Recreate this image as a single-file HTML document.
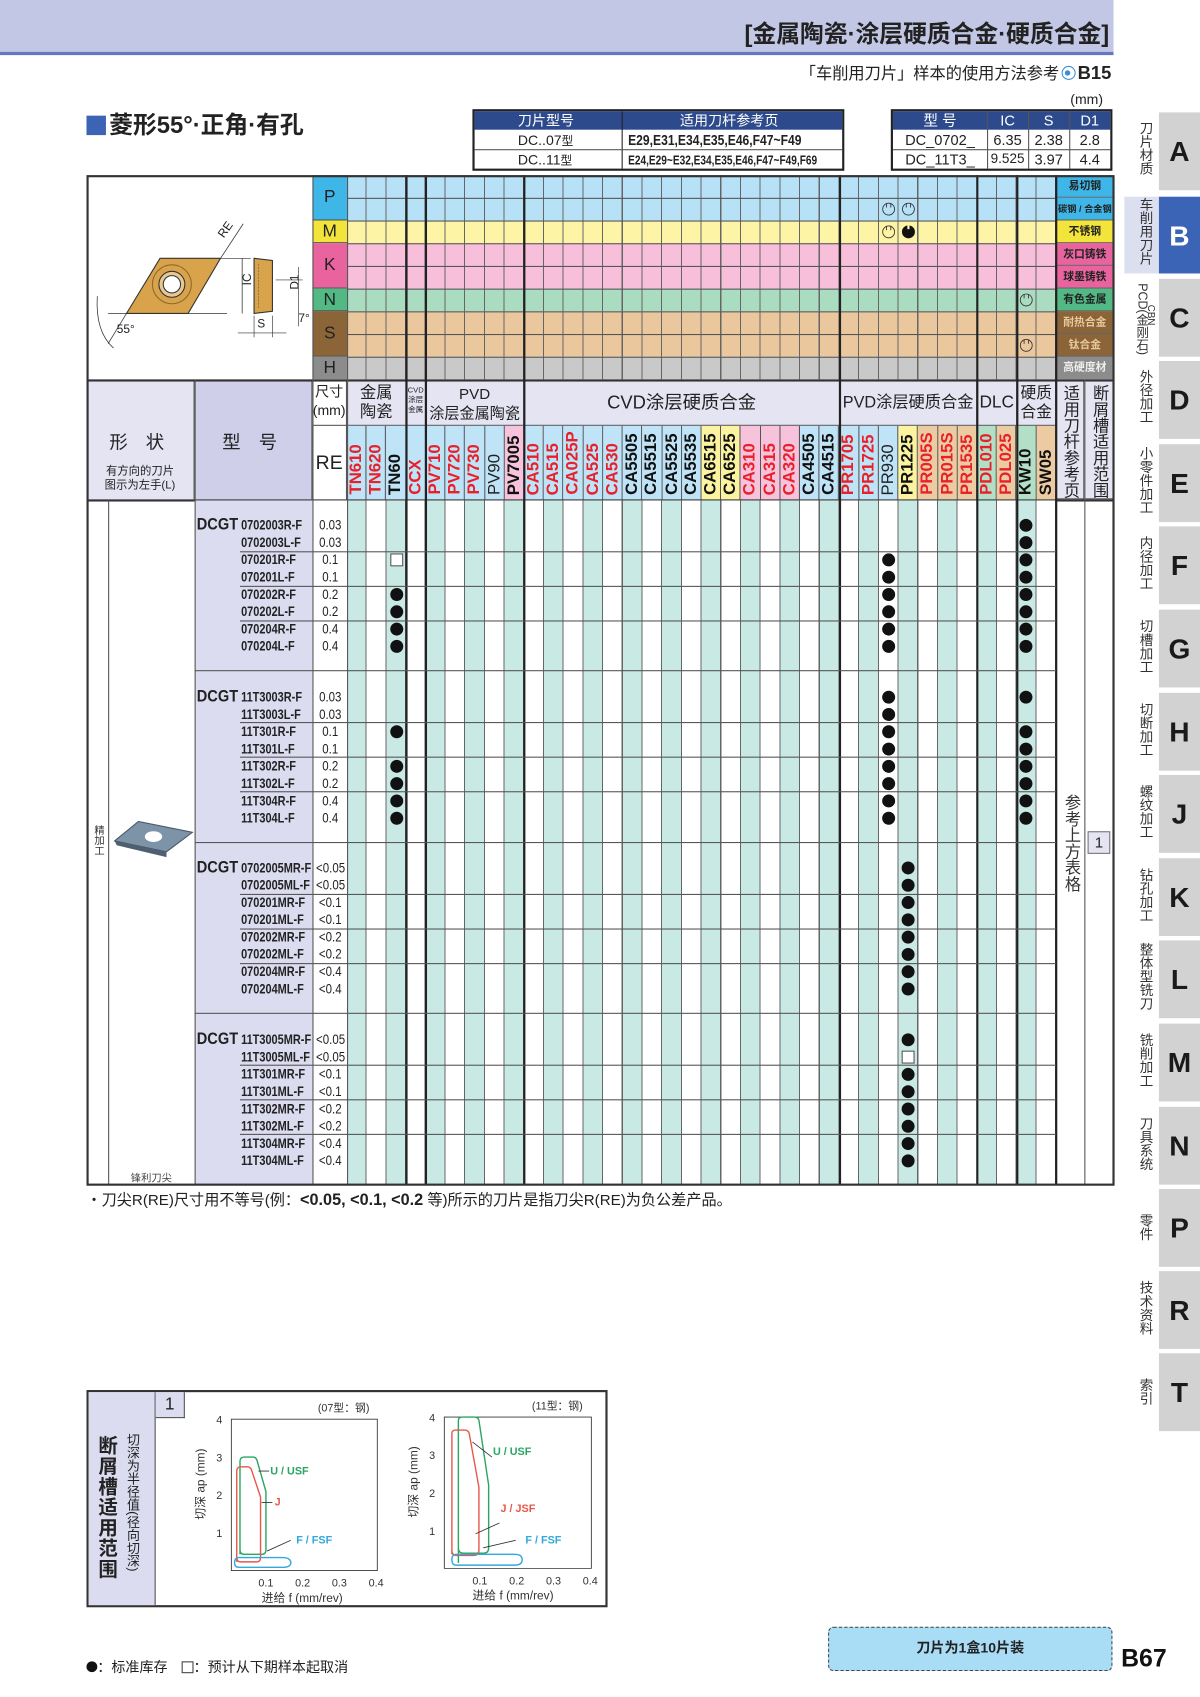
<!DOCTYPE html>
<html><head><meta charset="utf-8">
<style>
*{box-sizing:border-box;margin:0;padding:0}
body{width:1200px;height:1697px;overflow:hidden;background:#fff;position:relative;font-family:"Liberation Sans","Noto Sans CJK SC",sans-serif;color:#222}
#w{position:absolute;left:0;top:0;width:1110px;height:1570px;transform:scale(1.08108,1.08089);transform-origin:0 0}
.a{position:absolute}
.v{writing-mode:vertical-rl}
.dot{position:absolute;width:12px;height:12px;border-radius:50%;background:#111}
.sq{position:absolute;width:12px;height:12px;border:1px solid #555;background:#fff}
.grid{position:absolute;left:321px;width:656px}
.lab{position:absolute;left:977px;width:53px;font-size:10px;font-weight:bold;text-align:center;color:#222;border-bottom:1px solid #666}
.hl{position:absolute;height:1px;background:#555}
.vl{position:absolute;width:1px;background:#555}
.tv{position:absolute;width:2px;background:#222;top:162px;height:934px}
.gh{position:absolute;top:351px;height:43px;background:#e4e4f3;border-right:1px solid #555;border-bottom:1px solid #555;text-align:center;font-size:15px;line-height:18px;white-space:nowrap;overflow:hidden}
#gr{position:absolute;left:321px;top:394px;width:656px;height:68px;display:flex}
#gr span{width:18.222px;height:68px;border-right:1px solid #555;background:#bfe3f7;position:relative}
#gr span b{position:absolute;left:0;bottom:4px;width:18px;writing-mode:vertical-rl;transform:rotate(180deg);font-size:15.5px;line-height:18px;font-weight:bold;color:#e8202a;white-space:nowrap;font-family:"Liberation Sans",sans-serif}
#gr span b.k{color:#111}
#gr span b.n{font-weight:normal;color:#222}
.y{background:#fbf3a0!important}.p{background:#f7c2db!important}.t{background:#eccba3!important}.g{background:#b3dfc6!important}
.mg{position:absolute;left:180px;width:141px}
.mg div{height:16px;line-height:16px;position:relative;font-weight:bold;font-size:13px;white-space:nowrap}
.mg div .c{position:absolute;left:43px;transform:scaleX(0.78);transform-origin:0 50%}
.mg div .r{position:absolute;left:110px;width:31px;text-align:center;font-weight:normal;font-size:12.5px;transform:scaleX(0.85)}
.mg div .d{position:absolute;left:2px;font-size:15px;transform:scaleX(0.9);transform-origin:0 50%}
.tab{position:absolute;left:1072px;width:38px;height:72px;background:#d2d2d2;font-weight:bold;font-size:26px;text-align:center;line-height:72px;color:#1a1a1a}
.tl{position:absolute;left:1046px;width:20px;font-size:12.5px;line-height:14px;writing-mode:vertical-rl;color:#333;text-align:center}
.nr{display:inline-block;transform:scaleX(0.8);transform-origin:0 50%;white-space:nowrap}
</style></head><body><div id="w">

<!-- header -->
<div class="a" style="left:0;top:0;width:1030px;height:49px;background:#c2c7e5"></div>
<div class="a" style="left:0;top:48px;width:1030px;height:3px;background:#6476c4"></div>
<div class="a" style="right:84px;top:14px;font-size:22px;font-weight:bold;color:#222">[金属陶瓷·涂层硬质合金·硬质合金]</div>
<div class="a" style="right:82px;top:57px;font-size:15px;color:#222">「车削用刀片」样本的使用方法参考<span style="display:inline-block;width:13px;height:13px;border-radius:50%;border:1.5px solid #3a8fd8;vertical-align:-1px;position:relative;margin:0 2px"><span style="position:absolute;left:2.5px;top:2.5px;width:5px;height:5px;border-radius:50%;background:#3a8fd8"></span></span><b style="font-size:17px">B15</b></div>
<div class="a" style="left:990px;top:84px;font-size:13px">(mm)</div>
<div class="a" style="left:80px;top:98px;font-size:22px;font-weight:bold"><span style="display:inline-block;width:18px;height:18px;background:#3d63b5;vertical-align:-2px;margin-right:3px"></span>菱形55°·正角·有孔</div>

<!-- holder table -->
<div class="a" style="left:437px;top:101px;width:344px;height:57px;border:2px solid #222;font-size:13px">
 <div class="a" style="left:0;top:0;width:340px;height:17px;background:#2d4b8c;color:#fff;line-height:17px"><span class="a" style="left:40px">刀片型号</span><span class="a" style="left:190px">适用刀杆参考页</span></div>
 <div class="vl" style="left:136px;top:0;height:53px;background:#222"></div>
 <div class="hl" style="left:0;top:35px;width:340px"></div>
 <div class="a" style="left:40px;top:18px;line-height:17px">DC..07<small>型</small></div>
 <div class="a" style="left:40px;top:36px;line-height:17px">DC..11<small>型</small></div>
 <div class="a" style="left:142px;top:18px;line-height:17px;font-weight:bold;font-size:14px"><span class="nr">E29,E31,E34,E35,E46,F47~F49</span></div>
 <div class="a" style="left:142px;top:37px;line-height:17px;font-weight:bold;font-size:12px"><span class="nr" style="transform:scaleX(0.78)">E24,E29~E32,E34,E35,E46,F47~F49,F69</span></div>
</div>
<!-- dims table -->
<div class="a" style="left:824px;top:101px;width:205px;height:57px;border:2px solid #222;font-size:13.5px;text-align:center">
 <div class="a" style="left:0;top:0;width:201px;height:17px;background:#2d4b8c;color:#fff;line-height:17px"></div>
 <div class="a" style="left:0;top:0;width:87px;color:#fff;line-height:17px">型 号</div>
 <div class="a" style="left:87px;top:0;width:38px;color:#fff;line-height:17px">IC</div>
 <div class="a" style="left:125px;top:0;width:38px;color:#fff;line-height:17px">S</div>
 <div class="a" style="left:163px;top:0;width:38px;color:#fff;line-height:17px">D1</div>
 <div class="vl" style="left:87px;top:0;height:53px"></div><div class="vl" style="left:125px;top:0;height:53px"></div><div class="vl" style="left:163px;top:0;height:53px"></div>
 <div class="hl" style="left:0;top:35px;width:201px"></div>
 <div class="a" style="left:0;top:18px;width:87px;line-height:17px">DC_0702_</div>
 <div class="a" style="left:0;top:36px;width:87px;line-height:17px">DC_11T3_</div>
 <div class="a" style="left:87px;top:18px;width:38px;line-height:17px">6.35</div><div class="a" style="left:87px;top:36px;width:38px;line-height:17px;font-size:12.5px">9.525</div>
 <div class="a" style="left:125px;top:18px;width:38px;line-height:17px">2.38</div><div class="a" style="left:125px;top:36px;width:38px;line-height:17px">3.97</div>
 <div class="a" style="left:163px;top:18px;width:38px;line-height:17px">2.8</div><div class="a" style="left:163px;top:36px;width:38px;line-height:17px">4.4</div>
</div>

<!-- diagram -->
<svg class="a" style="left:80px;top:162px" width="209" height="189" viewBox="0 0 209 189">
 <polygon points="37,128 68,77 124,77 94,128" fill="#d9a34c" stroke="#333" stroke-width="1"/>
 <circle cx="79" cy="101" r="18" fill="none" stroke="#8a6a30" stroke-width="1"/>
 <circle cx="79" cy="101" r="12" fill="#e8c890" stroke="#333" stroke-width="1"/>
 <circle cx="79" cy="101" r="8" fill="#fff" stroke="#333" stroke-width="1"/>
 <line x1="20" y1="128" x2="130" y2="128" stroke="#333" stroke-width="0.7"/>
 <line x1="37" y1="128" x2="20" y2="156" stroke="#333" stroke-width="0.7"/>
 <path d="M10,112 Q8,145 25,160" fill="none" stroke="#333" stroke-width="0.7"/>
 <text x="28" y="146" font-size="11" fill="#222">55°</text>
 <line x1="124" y1="77" x2="145" y2="45" stroke="#333" stroke-width="0.7"/>
 <text x="122" y="55" font-size="11" fill="#222" transform="rotate(-55 128 52)">RE</text>
 <line x1="124" y1="77" x2="152" y2="77" stroke="#333" stroke-width="0.6"/>
 <line x1="144" y1="77" x2="144" y2="128" stroke="#333" stroke-width="0.7"/>
 <text x="148" y="106" font-size="11" fill="#222" transform="rotate(-90 148 102)">IC</text>
 <polygon points="155,77 172,79 172,126 155,128" fill="#d9a34c" stroke="#333" stroke-width="1"/>
 <line x1="159" y1="82" x2="159" y2="124" stroke="#555" stroke-width="0.5" stroke-dasharray="2,1"/>
 <line x1="175" y1="97" x2="200" y2="97" stroke="#333" stroke-width="0.6"/>
 <line x1="196" y1="85" x2="196" y2="140" stroke="#333" stroke-width="0.6"/>
 <text x="186" y="108" font-size="11" fill="#222" transform="rotate(-90 190 102)">D1</text>
 <text x="196" y="136" font-size="11" fill="#222">7°</text>
 <line x1="155" y1="130" x2="155" y2="150" stroke="#333" stroke-width="0.6"/>
 <line x1="172" y1="130" x2="172" y2="150" stroke="#333" stroke-width="0.6"/>
 <line x1="140" y1="146" x2="185" y2="146" stroke="#333" stroke-width="0.6"/>
 <text x="158" y="141" font-size="11" fill="#222">S</text>
</svg>

<!-- material letters -->
<div class="a" style="left:289px;top:162px;width:32px;height:42px;background:#3fb6e8;font-size:16px;text-align:center;line-height:42px;border-bottom:1px solid #555">P</div>
<div class="a" style="left:289px;top:204px;width:32px;height:21px;background:#f2e43a;font-size:16px;text-align:center;line-height:21px;border-bottom:1px solid #555">M</div>
<div class="a" style="left:289px;top:225px;width:32px;height:42px;background:#e9649f;font-size:16px;text-align:center;line-height:42px;border-bottom:1px solid #555">K</div>
<div class="a" style="left:289px;top:267px;width:32px;height:21px;background:#52b884;font-size:16px;text-align:center;line-height:21px;border-bottom:1px solid #555">N</div>
<div class="a" style="left:289px;top:288px;width:32px;height:42px;background:#8b6438;font-size:16px;text-align:center;line-height:42px;border-bottom:1px solid #555">S</div>
<div class="a" style="left:289px;top:330px;width:32px;height:21px;background:#8c8c8c;font-size:16px;text-align:center;line-height:21px">H</div>

<!-- material grids -->
<div class="grid" style="top:162px;height:42px;background:repeating-linear-gradient(90deg,transparent 0 17.222px,#666 17.222px 18.222px),#b7e1f6"></div>
<div class="grid" style="top:204px;height:21px;background:repeating-linear-gradient(90deg,transparent 0 17.222px,#666 17.222px 18.222px),#fdf4a6"></div>
<div class="grid" style="top:225px;height:42px;background:repeating-linear-gradient(90deg,transparent 0 17.222px,#666 17.222px 18.222px),#f7bfd9"></div>
<div class="grid" style="top:267px;height:21px;background:repeating-linear-gradient(90deg,transparent 0 17.222px,#666 17.222px 18.222px),#a9dcc0"></div>
<div class="grid" style="top:288px;height:42px;background:repeating-linear-gradient(90deg,transparent 0 17.222px,#666 17.222px 18.222px),#eac79c"></div>
<div class="grid" style="top:330px;height:21px;background:repeating-linear-gradient(90deg,transparent 0 17.222px,#666 17.222px 18.222px),#c9c9c9"></div>
<div class="hl" style="left:321px;top:183px;width:656px"></div>
<div class="hl" style="left:321px;top:204px;width:709px"></div>
<div class="hl" style="left:321px;top:225px;width:709px"></div>
<div class="hl" style="left:321px;top:246px;width:656px"></div>
<div class="hl" style="left:321px;top:267px;width:709px"></div>
<div class="hl" style="left:321px;top:288px;width:709px"></div>
<div class="hl" style="left:321px;top:309px;width:656px"></div>
<div class="hl" style="left:321px;top:330px;width:709px"></div>

<!-- right labels -->
<div class="lab" style="top:162px;height:21px;line-height:21px;background:#3fb6e8">易切钢</div>
<div class="lab" style="top:183px;height:21px;line-height:21px;background:#3fb6e8;font-size:8.5px">碳钢 / 合金钢</div>
<div class="lab" style="top:204px;height:21px;line-height:21px;background:#f2e43a">不锈钢</div>
<div class="lab" style="top:225px;height:21px;line-height:21px;background:#e9649f">灰口铸铁</div>
<div class="lab" style="top:246px;height:21px;line-height:21px;background:#e9649f">球墨铸铁</div>
<div class="lab" style="top:267px;height:21px;line-height:21px;background:#52b884">有色金属</div>
<div class="lab" style="top:288px;height:21px;line-height:21px;background:#8b6438;color:#e8c9a0">耐热合金</div>
<div class="lab" style="top:309px;height:21px;line-height:21px;background:#8b6438;color:#e8c9a0">钛合金</div>
<div class="lab" style="top:330px;height:21px;line-height:21px;background:#8c8c8c;color:#eee;border-bottom:none">高硬度材</div>

<!-- top symbols -->
<svg class="a" style="left:0;top:0" width="1030" height="351" viewBox="0 0 1030 351">
 <g fill="none" stroke="#333" stroke-width="0.8">
  <circle cx="822" cy="193.5" r="5.5"/><path d="M820,188 v4 M824,188 v4"/>
  <circle cx="840.3" cy="193.5" r="5.5"/><path d="M838.3,188 v4 M842.3,188 v4"/>
  <circle cx="822" cy="214.5" r="5.5"/><path d="M820,209 v4 M824,209 v4"/>
  <circle cx="949.3" cy="277.5" r="5.5"/><path d="M947.3,272 v4 M951.3,272 v4"/>
  <circle cx="949.3" cy="319.5" r="5.5"/><path d="M947.3,314 v4 M951.3,314 v4"/>
 </g>
 <circle cx="840.3" cy="214.5" r="6" fill="#111"/><rect x="839.3" y="208" width="2" height="4" fill="#fdf4a6"/>
</svg>

<!-- header row 1 -->
<div class="a" style="left:80px;top:351px;width:100px;height:111px;background:#e4e4f3;border-right:1px solid #555;text-align:center">
 <div style="margin-top:44px;font-size:17px;letter-spacing:6px">形 状</div>
 <div style="margin-top:10px;font-size:10.5px;line-height:13px">有方向的刀片<br>图示为左手(L)</div>
</div>
<div class="a" style="left:180px;top:351px;width:109px;height:111px;background:#cfcfea;border-right:1px solid #555;text-align:center;font-size:17px;padding-top:44px;letter-spacing:6px">型 号</div>
<div class="gh" style="left:289px;width:32px;font-size:13px;line-height:17px;padding-top:3px;background:#fff">尺寸<br>(mm)</div>
<div class="gh" style="left:321px;width:55px;padding-top:4px">金属<br>陶瓷</div>
<div class="gh" style="left:376px;width:18px;font-size:7px;line-height:9px;padding-top:6px">CVD<br>涂层<br>金属</div>
<div class="gh" style="left:394px;width:91px;padding-top:4px;font-size:14px">PVD<br>涂层金属陶瓷</div>
<div class="gh" style="left:485px;width:292px;font-size:17px;line-height:43px">CVD涂层硬质合金</div>
<div class="gh" style="left:777px;width:127px;font-size:15px;line-height:43px">PVD涂层硬质合金</div>
<div class="gh" style="left:904px;width:37px;font-size:16px;line-height:43px">DLC</div>
<div class="gh" style="left:941px;width:36px;padding-top:4px;font-size:14.5px">硬质<br>合金</div>
<div class="a" style="left:977px;top:351px;width:26px;height:111px;background:#e4e4f3;border-right:1px solid #555;border-bottom:1px solid #555;font-size:15px;line-height:16px;padding-top:5px;writing-mode:vertical-rl;padding-right:4px">适用刀杆参考页</div>
<div class="a" style="left:1003px;top:351px;width:27px;height:111px;background:#e4e4f3;border-bottom:1px solid #555;font-size:15px;line-height:16px;padding-top:5px;writing-mode:vertical-rl;padding-right:5px">断屑槽适用范围</div>
<div class="a" style="left:289px;top:394px;width:32px;height:68px;border-right:1px solid #555;font-size:18px;text-align:center;line-height:68px">RE</div>

<div id="gr">
<span><b>TN610</b></span><span><b>TN620</b></span><span><b class="k">TN60</b></span><span><b>CCX</b></span>
<span><b>PV710</b></span><span><b>PV720</b></span><span><b>PV730</b></span><span><b class="n">PV90</b></span><span class="p"><b class="k">PV7005</b></span>
<span><b>CA510</b></span><span><b>CA515</b></span><span><b>CA025P</b></span><span><b>CA525</b></span><span><b>CA530</b></span>
<span><b class="k">CA5505</b></span><span><b class="k">CA5515</b></span><span><b class="k">CA5525</b></span><span><b class="k">CA5535</b></span>
<span class="y"><b class="k">CA6515</b></span><span class="y"><b class="k">CA6525</b></span>
<span class="p"><b>CA310</b></span><span class="p"><b>CA315</b></span><span class="p"><b>CA320</b></span>
<span><b class="k">CA4505</b></span><span><b class="k">CA4515</b></span>
<span><b>PR1705</b></span><span><b>PR1725</b></span><span><b class="n">PR930</b></span><span class="y"><b class="k">PR1225</b></span>
<span class="t"><b>PR005S</b></span><span class="t"><b>PR015S</b></span><span class="t"><b>PR1535</b></span>
<span class="g"><b>PDL010</b></span><span class="t"><b>PDL025</b></span>
<span class="g"><b class="k">KW10</b></span><span class="t"><b class="k">SW05</b></span>
</div>
<div class="hl" style="left:80px;top:462px;width:950px;height:2px;background:#333"></div>
<div class="hl" style="left:80px;top:351px;width:950px;height:2px;background:#333"></div>

<!-- BODY -->
<div class="a" style="left:289px;top:463px;width:32px;height:633px;background:#fff"></div>
<div class="grid" style="top:463px;height:633px;background:repeating-linear-gradient(90deg,transparent 0 17.222px,#666 17.222px 18.222px),repeating-linear-gradient(90deg,#c9e9e5 0 18.222px,#fff 18.222px 36.444px)"></div>
<div class="a" style="left:180px;top:463px;width:109px;height:633px;background:#dcdcf0"></div>
<div class="vl" style="left:100px;top:463px;height:633px"></div>
<div class="vl" style="left:180px;top:351px;height:745px"></div>
<div class="vl" style="left:289px;top:162px;height:934px"></div>
<div class="vl" style="left:321px;top:162px;height:934px"></div>
<div class="vl" style="left:1003px;top:351px;height:745px"></div>
<div class="tv" style="left:976px;top:162px"></div>
<div class="tv" style="left:375px"></div><div class="tv" style="left:393px"></div><div class="tv" style="left:484px"></div>
<div class="tv" style="left:776px"></div><div class="tv" style="left:903px"></div><div class="tv" style="left:940px"></div>

<!-- horizontal body lines -->
<div class="hl" style="left:180px;top:620px;width:797px"></div>
<div class="hl" style="left:180px;top:779px;width:797px"></div>
<div class="hl" style="left:180px;top:937px;width:797px"></div>
<div class="hl" style="left:222px;top:510px;width:755px"></div><div class="hl" style="left:222px;top:542px;width:755px"></div><div class="hl" style="left:222px;top:574px;width:755px"></div>
<div class="hl" style="left:222px;top:668px;width:755px"></div><div class="hl" style="left:222px;top:700px;width:755px"></div><div class="hl" style="left:222px;top:732px;width:755px"></div>
<div class="hl" style="left:222px;top:827px;width:755px"></div><div class="hl" style="left:222px;top:859px;width:755px"></div><div class="hl" style="left:222px;top:891px;width:755px"></div>
<div class="hl" style="left:222px;top:985px;width:755px"></div><div class="hl" style="left:222px;top:1017px;width:755px"></div><div class="hl" style="left:222px;top:1049px;width:755px"></div>

<!-- model rows -->
<div class="mg" style="top:478px">
<div><span class="d">DCGT</span><span class="c">0702003R-F</span><span class="r">0.03</span></div>
<div><span class="c">0702003L-F</span><span class="r">0.03</span></div>
<div><span class="c">070201R-F</span><span class="r">0.1</span></div>
<div><span class="c">070201L-F</span><span class="r">0.1</span></div>
<div><span class="c">070202R-F</span><span class="r">0.2</span></div>
<div><span class="c">070202L-F</span><span class="r">0.2</span></div>
<div><span class="c">070204R-F</span><span class="r">0.4</span></div>
<div><span class="c">070204L-F</span><span class="r">0.4</span></div>
</div>
<div class="mg" style="top:636.5px">
<div><span class="d">DCGT</span><span class="c">11T3003R-F</span><span class="r">0.03</span></div>
<div><span class="c">11T3003L-F</span><span class="r">0.03</span></div>
<div><span class="c">11T301R-F</span><span class="r">0.1</span></div>
<div><span class="c">11T301L-F</span><span class="r">0.1</span></div>
<div><span class="c">11T302R-F</span><span class="r">0.2</span></div>
<div><span class="c">11T302L-F</span><span class="r">0.2</span></div>
<div><span class="c">11T304R-F</span><span class="r">0.4</span></div>
<div><span class="c">11T304L-F</span><span class="r">0.4</span></div>
</div>
<div class="mg" style="top:795px">
<div><span class="d">DCGT</span><span class="c">0702005MR-F</span><span class="r">&lt;0.05</span></div>
<div><span class="c">0702005ML-F</span><span class="r">&lt;0.05</span></div>
<div><span class="c">070201MR-F</span><span class="r">&lt;0.1</span></div>
<div><span class="c">070201ML-F</span><span class="r">&lt;0.1</span></div>
<div><span class="c">070202MR-F</span><span class="r">&lt;0.2</span></div>
<div><span class="c">070202ML-F</span><span class="r">&lt;0.2</span></div>
<div><span class="c">070204MR-F</span><span class="r">&lt;0.4</span></div>
<div><span class="c">070204ML-F</span><span class="r">&lt;0.4</span></div>
</div>
<div class="mg" style="top:953.5px">
<div><span class="d">DCGT</span><span class="c">11T3005MR-F</span><span class="r">&lt;0.05</span></div>
<div><span class="c">11T3005ML-F</span><span class="r">&lt;0.05</span></div>
<div><span class="c">11T301MR-F</span><span class="r">&lt;0.1</span></div>
<div><span class="c">11T301ML-F</span><span class="r">&lt;0.1</span></div>
<div><span class="c">11T302MR-F</span><span class="r">&lt;0.2</span></div>
<div><span class="c">11T302ML-F</span><span class="r">&lt;0.2</span></div>
<div><span class="c">11T304MR-F</span><span class="r">&lt;0.4</span></div>
<div><span class="c">11T304ML-F</span><span class="r">&lt;0.4</span></div>
</div>

<!-- dots group1 -->
<div class="sq" style="left:360.6px;top:512px"></div>
<div class="dot" style="left:360.6px;top:544px"></div><div class="dot" style="left:360.6px;top:560px"></div><div class="dot" style="left:360.6px;top:576px"></div><div class="dot" style="left:360.6px;top:592px"></div>
<div class="dot" style="left:816.1px;top:512px"></div><div class="dot" style="left:816.1px;top:528px"></div><div class="dot" style="left:816.1px;top:544px"></div><div class="dot" style="left:816.1px;top:560px"></div><div class="dot" style="left:816.1px;top:576px"></div><div class="dot" style="left:816.1px;top:592px"></div>
<div class="dot" style="left:943.3px;top:480px"></div><div class="dot" style="left:943.3px;top:496px"></div><div class="dot" style="left:943.3px;top:512px"></div><div class="dot" style="left:943.3px;top:528px"></div><div class="dot" style="left:943.3px;top:544px"></div><div class="dot" style="left:943.3px;top:560px"></div><div class="dot" style="left:943.3px;top:576px"></div><div class="dot" style="left:943.3px;top:592px"></div>
<!-- group2 -->
<div class="dot" style="left:360.6px;top:670.5px"></div><div class="dot" style="left:360.6px;top:702.5px"></div><div class="dot" style="left:360.6px;top:718.5px"></div><div class="dot" style="left:360.6px;top:734.5px"></div><div class="dot" style="left:360.6px;top:750.5px"></div>
<div class="dot" style="left:816.1px;top:638.5px"></div><div class="dot" style="left:816.1px;top:654.5px"></div><div class="dot" style="left:816.1px;top:670.5px"></div><div class="dot" style="left:816.1px;top:686.5px"></div><div class="dot" style="left:816.1px;top:702.5px"></div><div class="dot" style="left:816.1px;top:718.5px"></div><div class="dot" style="left:816.1px;top:734.5px"></div><div class="dot" style="left:816.1px;top:750.5px"></div>
<div class="dot" style="left:943.3px;top:638.5px"></div><div class="dot" style="left:943.3px;top:670.5px"></div><div class="dot" style="left:943.3px;top:686.5px"></div><div class="dot" style="left:943.3px;top:702.5px"></div><div class="dot" style="left:943.3px;top:718.5px"></div><div class="dot" style="left:943.3px;top:734.5px"></div><div class="dot" style="left:943.3px;top:750.5px"></div>
<!-- group3 -->
<div class="dot" style="left:834.3px;top:797px"></div><div class="dot" style="left:834.3px;top:813px"></div><div class="dot" style="left:834.3px;top:829px"></div><div class="dot" style="left:834.3px;top:845px"></div><div class="dot" style="left:834.3px;top:861px"></div><div class="dot" style="left:834.3px;top:877px"></div><div class="dot" style="left:834.3px;top:893px"></div><div class="dot" style="left:834.3px;top:909px"></div>
<!-- group4 -->
<div class="dot" style="left:834.3px;top:955.5px"></div><div class="sq" style="left:834.3px;top:971.5px"></div><div class="dot" style="left:834.3px;top:987.5px"></div><div class="dot" style="left:834.3px;top:1003.5px"></div><div class="dot" style="left:834.3px;top:1019.5px"></div><div class="dot" style="left:834.3px;top:1035.5px"></div><div class="dot" style="left:834.3px;top:1051.5px"></div><div class="dot" style="left:834.3px;top:1067.5px"></div>

<!-- left body -->
<div class="a v" style="left:84px;top:763px;font-size:9.5px;line-height:12px;color:#333">精加工</div>
<svg class="a" style="left:104px;top:756px" width="76" height="40" viewBox="0 0 76 40">
 <polygon points="2,22 24,4 74,14 50,32" fill="#7d93a8" stroke="#4a5a68" stroke-width="1"/>
 <polygon points="2,22 50,32 50,37 4,26" fill="#4d5f70"/>
 <ellipse cx="38" cy="18" rx="8" ry="5" fill="#fff"/>
</svg>
<div class="a" style="left:121px;top:1082px;font-size:9.5px;color:#444">锋利刀尖</div>

<!-- right body cols -->
<div class="a" style="left:980px;top:735px;width:20px;font-size:15px;line-height:17px;writing-mode:vertical-rl;color:#333">参考上方表格</div>
<div class="a" style="left:1006px;top:769px;width:21px;height:21px;border:1px solid #777;background:#e4e4f3;font-size:14px;text-align:center;line-height:19px">1</div>

<!-- table outer border -->
<div class="a" style="left:80px;top:162px;width:951px;height:935px;border:2px solid #333"></div>

<div class="a" style="left:80px;top:1100px;font-size:14px;color:#222">・刀尖R(RE)尺寸用不等号(例：<b style="font-size:15px">&lt;0.05, &lt;0.1, &lt;0.2</b> 等)所示的刀片是指刀尖R(RE)为负公差产品。</div>

<!-- chart -->
<div class="a" style="left:80px;top:1286px;width:482px;height:201px;border:2px solid #333">
 <div class="a" style="left:0;top:0;width:62px;height:197px;background:#dcdcf0;border-right:1px solid #555"></div>
 <div class="a v" style="left:6px;top:40px;font-size:18px;font-weight:bold;line-height:22px;letter-spacing:1px">断屑槽适用范围</div>
 <div class="a v" style="left:34px;top:38px;font-size:12px;line-height:14px">切深为半径值(径向切深)</div>
 <div class="a" style="left:62px;top:0;width:27px;height:24px;background:#dcdcf0;border-right:1px solid #555;border-bottom:1px solid #555;font-size:16px;text-align:center;line-height:24px">1</div>
 <svg class="a" style="left:0;top:0" width="478" height="197" viewBox="0 0 478 197" font-family="Liberation Sans, Noto Sans CJK SC, sans-serif">
  <g fill="none" stroke="#333" stroke-width="0.8">
   <path d="M132,25 V165 H267 V25 Z"/>
   <path d="M329,23 V163 H465 V23 Z"/>
  </g>
  <g font-size="10" fill="#333">
   <text x="118" y="29">4</text><text x="118" y="64">3</text><text x="118" y="99">2</text><text x="118" y="134">1</text>
   <text x="157" y="180">0.1</text><text x="191" y="180">0.2</text><text x="225" y="180">0.3</text><text x="259" y="180">0.4</text>
   <text x="315" y="27">4</text><text x="315" y="62">3</text><text x="315" y="97">2</text><text x="315" y="132">1</text>
   <text x="355" y="178">0.1</text><text x="389" y="178">0.2</text><text x="423" y="178">0.3</text><text x="457" y="178">0.4</text>
   <text x="212" y="18">(07型：钢)</text><text x="410" y="16">(11型：钢)</text>
   <text x="160" y="194" font-size="11">进给 f (mm/rev)</text><text x="355" y="192" font-size="11">进给 f (mm/rev)</text>
   <text transform="translate(107,118) rotate(-90)" font-size="11">切深 ap (mm)</text>
   <text transform="translate(304,116) rotate(-90)" font-size="11">切深 ap (mm)</text>
  </g>
  <g fill="none" stroke-width="1.3">
   <path d="M140,150 V64 q0,-4 4,-4 h8 q3,0 4,4 l8,28 v54 q0,4 -4,4 h-16 q-4,0 -4,-4Z" stroke="#2aa562"/>
   <path d="M137,157 V73 q0,-4 4,-4 h6 q3,0 4,4 l8,24 v56 q0,4 -4,4 h-14 q-4,0 -4,-4Z" stroke="#e8574a"/>
   <path d="M139,153 h40 q8,0 8,5 q0,4 -8,4 h-40 q-4,0 -4,-4 q0,-5 4,-5Z" stroke="#33a8dc"/>
   <path d="M342,158 V26 q0,-3 4,-3 h11 q3,0 4,3 l9,60 v58 q0,5 -5,5 h-18 q-5,0 -5,-5Z" stroke="#2aa562"/>
   <path d="M336,150 V38 q0,-3 4,-3 h8 q3,0 4,3 l9,50 v58 q0,5 -5,5 h-16 q-4,0 -4,-5Z" stroke="#e8574a"/>
   <path d="M340,150 h54 q7,0 7,5 q0,5 -7,5 h-54 q-4,0 -4,-5 q0,-5 4,-5Z" stroke="#33a8dc"/>
  </g>
  <g stroke="#333" stroke-width="0.8"><path d="M157,73 h10 M160,102 h10 M165,147 l22,-10 M355,46 l18,14 M358,131 l22,-10 M365,144 l30,-7"/></g>
  <g font-size="10" font-weight="bold">
   <text x="168" y="76" fill="#2aa562">U / USF</text><text x="172" y="105" fill="#e8574a">J</text><text x="192" y="140" fill="#33a8dc">F / FSF</text>
   <text x="374" y="58" fill="#2aa562">U / USF</text><text x="381" y="111" fill="#e8574a">J / JSF</text><text x="404" y="140" fill="#33a8dc">F / FSF</text>
  </g>
 </svg>
</div>

<!-- footer -->
<div class="a" style="left:80px;top:1532px;font-size:13px;color:#222"><span style="display:inline-block;width:10px;height:10px;border-radius:50%;background:#111;vertical-align:0"></span>：标准库存　<span style="display:inline-block;width:11px;height:11px;border:1px solid #444;vertical-align:-1px"></span>：预计从下期样本起取消</div>
<div class="a" style="left:766px;top:1505px;width:263px;height:41px;background:#a9ddf6;border:1.5px dashed #444;border-radius:5px;text-align:center;line-height:38px;font-size:13px;font-weight:bold">刀片为1盒10片装</div>
<div class="a" style="left:1037px;top:1521px;font-size:23px;font-weight:bold;color:#111">B67</div>

<!-- sidebar -->
<div class="a" style="left:1040px;top:182px;width:32px;height:71px;background:#dcdff0"></div>
<div class="tab" style="top:104px">A</div><div class="tl" style="top:112px">刀片材质</div>
<div class="tab" style="top:182px;height:71px;background:#3b63b6;color:#fff">B</div><div class="tl" style="top:183px">车削用刀片</div>
<div class="tab" style="top:258px">C</div><div class="tl" style="top:262px;left:1043px;font-size:11.5px">PCD(金刚石)</div><div class="tl" style="top:282px;left:1058px;font-size:9px;line-height:10px;width:12px">CBN</div>
<div class="tab" style="top:334px">D</div><div class="tl" style="top:342px">外径加工</div>
<div class="tab" style="top:411px">E</div><div class="tl" style="top:413px">小零件加工</div>
<div class="tab" style="top:487px">F</div><div class="tl" style="top:496px">内径加工</div>
<div class="tab" style="top:564px">G</div><div class="tl" style="top:573px">切槽加工</div>
<div class="tab" style="top:641px">H</div><div class="tl" style="top:650px">切断加工</div>
<div class="tab" style="top:717px">J</div><div class="tl" style="top:726px">螺纹加工</div>
<div class="tab" style="top:794px">K</div><div class="tl" style="top:803px">钻孔加工</div>
<div class="tab" style="top:870px">L</div><div class="tl" style="top:872px">整体型铣刀</div>
<div class="tab" style="top:947px">M</div><div class="tl" style="top:956px">铣削加工</div>
<div class="tab" style="top:1024px">N</div><div class="tl" style="top:1033px">刀具系统</div>
<div class="tab" style="top:1100px">P</div><div class="tl" style="top:1123px">零件</div>
<div class="tab" style="top:1176px">R</div><div class="tl" style="top:1185px">技术资料</div>
<div class="tab" style="top:1252px">T</div><div class="tl" style="top:1275px">索引</div>

</div></body></html>
